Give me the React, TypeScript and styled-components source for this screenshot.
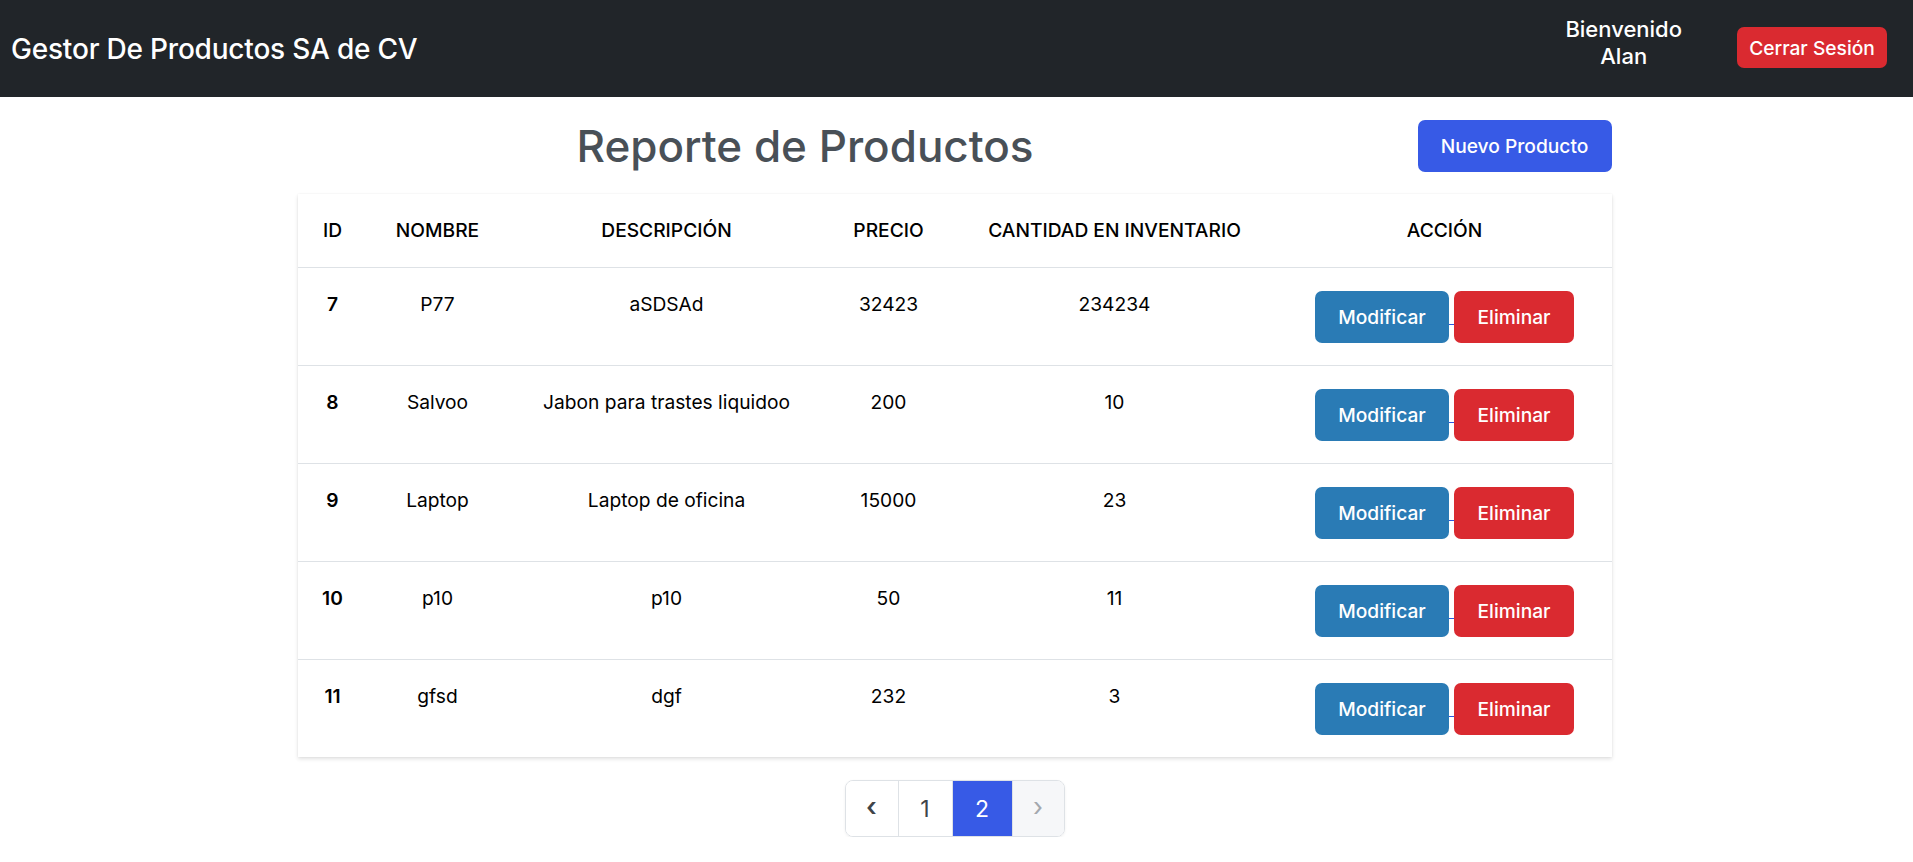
import React from "react";
import styled, { createGlobalStyle } from "styled-components";

const GlobalStyle = createGlobalStyle`
  html, body { margin: 0; padding: 0; background: #ffffff; }
  body { font-family: Inter, "Noto Sans", sans-serif; color: #212529; }
  * { box-sizing: border-box; }
`;

const NavBar = styled.header`
  height: 97px;
  background: #212529;
  display: flex;
  align-items: center;
  justify-content: space-between;
  padding: 0 26px 0 11px;
`;

const Brand = styled.div`
  color: #ffffff;
  font-size: 28px;
  font-weight: 500;
  letter-spacing: -0.2px;
`;

const NavRight = styled.div`
  display: flex;
  align-items: center;
  gap: 55px;
`;

const Welcome = styled.div`
  color: #ffffff;
  font-size: 22px;
  font-weight: 500;
  line-height: 27px;
  text-align: center;
  margin-bottom: 12px;
`;

const Button = styled.button<{ $bg: string; $w: number; $h: number }>`
  display: inline-flex;
  align-items: center;
  justify-content: center;
  width: ${(p) => p.$w}px;
  height: ${(p) => p.$h}px;
  background: ${(p) => p.$bg};
  color: #ffffff;
  border: none;
  border-radius: 7px;
  font-family: Inter, "Noto Sans", sans-serif;
  font-size: 19.2px;
  font-weight: 500;
  padding: 0;
  cursor: pointer;
  vertical-align: top;
`;

const LogoutButton = styled(Button)`
  margin-bottom: 2px;
`;

const Main = styled.main`
  width: 1314px;
  margin: 0 0 0 calc((100% - 1318px) / 2);
  padding-top: 23px;
`;

const TitleRow = styled.div`
  display: flex;
  align-items: center;
  justify-content: space-between;
  height: 52px;
  margin-bottom: 22px;
`;

const Title = styled.h1`
  margin: 0 0 0 279px;
  font-size: 44px;
  font-weight: 500;
  color: #495057;
  line-height: 52px;
`;

const Card = styled.div`
  background: #ffffff;
  box-shadow: 0 2px 4px rgba(0, 0, 0, 0.12), 0 0 2px rgba(0, 0, 0, 0.05);
`;

const Table = styled.table`
  width: 100%;
  border-collapse: collapse;
  table-layout: fixed;
  font-size: 19.2px;
  color: #000000;
`;

const Th = styled.th`
  font-weight: 500;
  text-transform: uppercase;
  padding: 23px 4px;
  line-height: 27px;
  text-align: center;
  border-bottom: 1px solid #dee2e6;
`;

const Td = styled.td<{ $bold?: boolean }>`
  padding: 23px 4px 22px;
  line-height: 27px;
  text-align: center;
  vertical-align: top;
  font-weight: ${(p) => (p.$bold ? 600 : 400)};
  border-bottom: 1px solid #dee2e6;
  tr:last-child > & { border-bottom: none; }
`;

const ActionLink = styled.a`
  color: #2b57e0;
  text-decoration: underline;
  white-space: nowrap;
  font-size: 18px;
  line-height: 52px;
`;

const Pager = styled.nav`
  display: flex;
  justify-content: center;
  margin-top: 23px;
`;

const PagerList = styled.ul`
  display: flex;
  list-style: none;
  margin: 0;
  padding: 0;
  border: 1px solid #dee2e6;
  border-radius: 8px;
  overflow: hidden;
  box-shadow: 0 1px 3px rgba(0, 0, 0, 0.06);
`;

const PageItem = styled.li<{ $w: number; $active?: boolean; $disabled?: boolean }>`
  width: ${(p) => p.$w}px;
  height: 55px;
  display: flex;
  align-items: center;
  justify-content: center;
  font-size: 23px;
  color: ${(p) => (p.$active ? "#ffffff" : p.$disabled ? "#a3a8ae" : "#3f4449")};
  background: ${(p) => (p.$active ? "#375ae6" : p.$disabled ? "#f6f7f9" : "#ffffff")};
  & + & { border-left: 1px solid #dee2e6; }
`;

const Arrow = styled.span<{ $strong?: boolean }>`
  font-size: 26px;
  line-height: 1;
  margin-top: -3px;
  font-weight: ${(p) => (p.$strong ? 600 : 400)};
`;

type Product = { id: number; nombre: string; descripcion: string; precio: number; cantidad: number };

const products: Product[] = [
  { id: 7, nombre: "P77", descripcion: "aSDSAd", precio: 32423, cantidad: 234234 },
  { id: 8, nombre: "Salvoo", descripcion: "Jabon para trastes liquidoo", precio: 200, cantidad: 10 },
  { id: 9, nombre: "Laptop", descripcion: "Laptop de oficina", precio: 15000, cantidad: 23 },
  { id: 10, nombre: "p10", descripcion: "p10", precio: 50, cantidad: 11 },
  { id: 11, nombre: "gfsd", descripcion: "dgf", precio: 232, cantidad: 3 },
];

const colWidths = [70, 140, 318, 126, 326, 334];

export default function App() {
  return (
    <>
      <GlobalStyle />
      <NavBar>
        <Brand>Gestor De Productos SA de CV</Brand>
        <NavRight>
          <Welcome>
            Bienvenido
            <br />
            Alan
          </Welcome>
          <LogoutButton $bg="#da2a30" $w={150} $h={41}>
            Cerrar Sesión
          </LogoutButton>
        </NavRight>
      </NavBar>
      <Main>
        <TitleRow>
          <Title>Reporte de Productos</Title>
          <Button $bg="#375ae6" $w={194} $h={52}>
            Nuevo Producto
          </Button>
        </TitleRow>
        <Card>
          <Table>
            <colgroup>
              {colWidths.map((w, i) => (
                <col key={i} style={{ width: w }} />
              ))}
            </colgroup>
            <thead>
              <tr>
                <Th>ID</Th>
                <Th>Nombre</Th>
                <Th>Descripción</Th>
                <Th>Precio</Th>
                <Th>Cantidad en Inventario</Th>
                <Th>Acción</Th>
              </tr>
            </thead>
            <tbody>
              {products.map((p) => (
                <tr key={p.id}>
                  <Td $bold>{p.id}</Td>
                  <Td>{p.nombre}</Td>
                  <Td>{p.descripcion}</Td>
                  <Td>{p.precio}</Td>
                  <Td>{p.cantidad}</Td>
                  <Td>
                    <ActionLink href="#">
                      <Button $bg="#2a7bb5" $w={134} $h={52}>
                        Modificar
                      </Button>{" "}
                      <Button $bg="#da2a30" $w={120} $h={52}>
                        Eliminar
                      </Button>
                    </ActionLink>
                  </Td>
                </tr>
              ))}
            </tbody>
          </Table>
        </Card>
        <Pager>
          <PagerList>
            <PageItem $w={52}>
              <Arrow $strong>‹</Arrow>
            </PageItem>
            <PageItem $w={54}>1</PageItem>
            <PageItem $w={60} $active>
              2
            </PageItem>
            <PageItem $w={52} $disabled>
              <Arrow>›</Arrow>
            </PageItem>
          </PagerList>
        </Pager>
      </Main>
    </>
  );
}
